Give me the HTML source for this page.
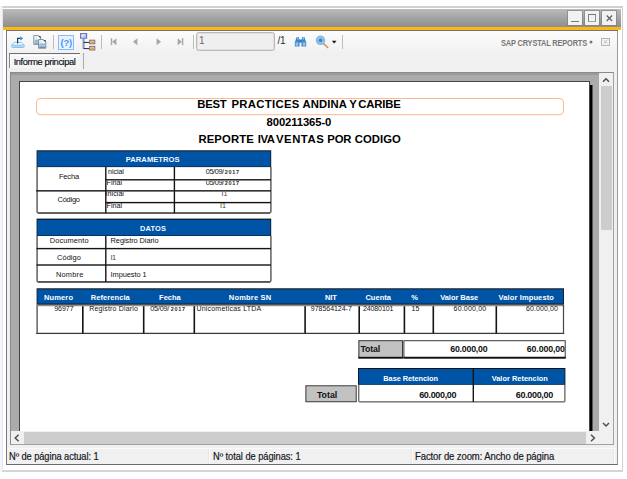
<!DOCTYPE html>
<html>
<head>
<meta charset="utf-8">
<title>Informe</title>
<style>
html,body{margin:0;padding:0;}
body{width:627px;height:479px;background:#fff;position:relative;overflow:hidden;font-family:"Liberation Sans",sans-serif;}
.a{position:absolute;box-sizing:border-box;}
.t{position:absolute;white-space:nowrap;line-height:1;color:#000;}
svg{position:absolute;overflow:visible;}
</style>
</head>
<body>
<div class="a" style="left:0px;top:6px;width:3px;height:466px;background:#f3f5fa;"></div>
<div class="a" style="left:2px;top:6px;width:621px;height:466px;background:#fff;border:1px solid #d6d6d6;border-top:2px solid #d0d0d0;border-right:1.5px solid #d0d0d0;border-bottom:2px solid #d4d4d4;border-left-color:#e2e6f0;"></div>
<div class="a" style="left:3px;top:9px;width:618px;height:18px;background:linear-gradient(#bbbbbb,#a6a6a6 45%,#8e8e8e);"></div>
<div class="a" style="left:3px;top:27px;width:618px;height:3px;background:#fdb714;"></div>
<div class="a" style="left:568px;top:11px;width:14px;height:14px;background:#f2f2f2;box-shadow:0 0 0 1px rgba(120,120,120,.55);"></div>
<div class="a" style="left:585px;top:11px;width:14px;height:14px;background:#f2f2f2;box-shadow:0 0 0 1px rgba(120,120,120,.55);"></div>
<div class="a" style="left:602px;top:11px;width:14px;height:14px;background:#f2f2f2;box-shadow:0 0 0 1px rgba(120,120,120,.55);"></div>
<div class="a" style="left:571px;top:21px;width:8px;height:1px;background:#7a7a7a;"></div>
<div class="a" style="left:588px;top:14px;width:8px;height:8px;border:1px solid #8c8c8c;border-top-color:#7a7a7a;border-left-color:#808080;border-bottom-color:#a8a8a8;"></div>
<svg style="left:602px;top:11px" width="14" height="14"><path d="M4.7 4.5 L10.1 10 M10.1 4.5 L4.7 10" stroke="#666" stroke-width="1.35" fill="none"/></svg>
<div class="a" style="left:6px;top:30px;width:612px;height:435px;background:#f0f0f0;border-left:1px solid #7c7c7c;border-right:1px solid #9a9a9a;border-bottom:1px solid #6a6a6a;"></div>
<div class="a" style="left:7px;top:30px;width:610px;height:24px;background:linear-gradient(#fdfdfd,#f9f9f9 35%,#f0f0f0);"></div>
<div class="a" style="left:6px;top:30px;width:612px;height:1px;background:#747474;"></div>
<div class="a" style="left:53px;top:35px;width:1px;height:14px;background:#bdbdbd;"></div>
<div class="a" style="left:101px;top:35px;width:1px;height:14px;background:#bdbdbd;"></div>
<div class="a" style="left:193px;top:35px;width:1px;height:14px;background:#bdbdbd;"></div>
<div class="a" style="left:342px;top:35px;width:1px;height:14px;background:#bdbdbd;"></div>
<svg style="left:10px;top:34px" width="16" height="16" viewBox="0 0 16 16">
<path d="M4 8.4 L11.8 8.4 L14.2 11 L14.2 12.5 Q14.2 13.5 13.2 13.5 L2.6 13.5 Q1.6 13.5 1.6 12.5 L1.6 11 Z" fill="#fff" stroke="#86c4ef" stroke-width="1"/>
<path d="M2.2 11.3 L13.6 11.3 L13.6 12.9 L2.2 12.9 Z" fill="#a4d0f2"/>
<path d="M2 11 L13.8 11" stroke="#6db1e6" stroke-width="0.7"/>
<path d="M7.6 9.6 L7.6 4.4 L10.4 4.4" stroke="#1c3f70" stroke-width="1.2" fill="none"/>
<path d="M10.2 2.2 L13.2 4.4 L10.2 6.6 Z" fill="#3a8fd6"/>
</svg>
<svg style="left:33px;top:34px" width="14" height="15" viewBox="0 0 14 15">
<path d="M0.8 1.6 L5.4 1.6 L7.8 4 L7.8 10.4 L0.8 10.4 Z" fill="#fff" stroke="#8f8f8f" stroke-width="1"/>
<path d="M5.2 2 L7.6 2 L7.6 4.2 Z" fill="#1c3f70"/>
<rect x="1.6" y="3.6" width="3" height="0.8" fill="#c9c9c9"/>
<rect x="1.4" y="5.6" width="5.8" height="2.4" fill="#7cc0f0"/>
<rect x="1.4" y="8.6" width="4" height="0.9" fill="#2d5f9a"/>
<path d="M5.6 5.6 L10.4 5.6 L12.8 8 L12.8 14.2 L5.6 14.2 Z" fill="#fff" stroke="#878787" stroke-width="1"/>
<path d="M10.2 6 L12.6 6 L12.6 8.2 Z" fill="#1c3f70"/>
<rect x="6.4" y="7.6" width="3" height="0.8" fill="#c9c9c9"/>
<rect x="6.2" y="9.4" width="6" height="2.3" fill="#7cc0f0"/>
<rect x="6.2" y="12.5" width="6" height="1.1" fill="#2d5f9a"/>
</svg>
<div class="a" style="left:58px;top:35px;width:16px;height:15px;background:#e9f2fd;border:1px solid #86bcff;"></div>
<div class="t" style="left:60.40px;top:38.00px;font-size:9.5px;color:#4a95ff;font-weight:bold;letter-spacing:-0.165px;">(?)</div>
<svg style="left:79px;top:32px" width="18" height="19" viewBox="0 0 18 19">
<rect x="1.6" y="1.6" width="6" height="4.6" fill="#dfeaf8" stroke="#6c6cb4" stroke-width="1.1"/>
<path d="M2.4 5.4 L7 2.4 L7 5.4 Z" fill="#a9c6ea"/>
<rect x="3.4" y="6.6" width="1.1" height="10.2" fill="#a3b0c6"/>
<rect x="4.5" y="6.6" width="0.9" height="10.2" fill="#456592"/>
<rect x="4.6" y="9.9" width="6" height="1.1" fill="#1c3f70"/>
<rect x="4.6" y="16" width="6" height="1.1" fill="#1c3f70"/>
<rect x="10.6" y="8.2" width="5.2" height="3.6" fill="#fcc838" stroke="#7272b4" stroke-width="1"/>
<rect x="11.2" y="10.2" width="4" height="1.1" fill="#f09a1e"/>
<rect x="10.6" y="14.4" width="5.2" height="3.6" fill="#fcc838" stroke="#7272b4" stroke-width="1"/>
<rect x="11.2" y="16.4" width="4" height="1.1" fill="#f09a1e"/>
</svg>
<svg style="left:100px;top:30px" width="100" height="24" viewBox="0 0 100 24">
<g fill="#a6a6a6">
<rect x="10.8" y="8.2" width="1.4" height="7"/><path d="M16.4 8.2 L16.4 15.2 L12.2 11.7 Z"/>
<path d="M37.4 8.2 L37.4 15.2 L33 11.7 Z"/>
<path d="M56.6 8.2 L56.6 15.2 L61 11.7 Z"/>
<path d="M77.7 8.2 L77.7 15.2 L81.9 11.7 Z"/><rect x="81.9" y="8.2" width="1.4" height="7"/>
</g></svg>
<div class="a" style="left:196px;top:32px;width:79px;height:18.5px;background:#efefef;border:1px solid #b9b9b9;border-radius:2.5px;box-shadow:inset 0 0 0 0.5px #cfcfcf;"></div>
<div class="t" style="left:199.00px;top:36.00px;font-size:10px;color:#75607c;">1</div>
<div class="t" style="left:277.40px;top:36.00px;font-size:10px;color:#2a2a33;letter-spacing:-0.140px;">/1</div>
<svg style="left:294px;top:36px" width="13" height="12" viewBox="0 0 13 12">
<path d="M2.6 1 L4.8 1 L5.4 3.4 L5.6 10.6 L0.8 10.6 L0.8 6.4 Z" fill="#3c8acb"/>
<path d="M10.4 1 L8.2 1 L7.6 3.4 L7.4 10.6 L12.2 10.6 L12.2 6.4 Z" fill="#3c8acb"/>
<rect x="5.2" y="3.6" width="2.6" height="3" fill="#2f73b4"/>
<rect x="1.6" y="6.4" width="2.6" height="3.4" fill="#8ec5ee"/>
<rect x="8.8" y="6.4" width="2.6" height="3.4" fill="#8ec5ee"/>
<rect x="3.1" y="1.4" width="1.2" height="2" fill="#a8d3f2"/>
<rect x="8.7" y="1.4" width="1.2" height="2" fill="#a8d3f2"/>
</svg>
<svg style="left:314px;top:34px" width="24" height="16" viewBox="0 0 24 16">
<path d="M9.4 9.4 L13.6 13.4" stroke="#e0935a" stroke-width="1.7" stroke-linecap="round"/>
<circle cx="6.5" cy="6.3" r="4" fill="#9cc4ea" stroke="#79b9f3" stroke-width="1.5"/>
<circle cx="6.5" cy="6.3" r="1.9" fill="#4d83b6"/>
<path d="M17.9 6.8 L22.5 6.8 L20.2 9.4 Z" fill="#111"/>
</svg>
<div class="t" style="left:501.20px;top:39.00px;font-size:8.6px;color:#767676;font-weight:bold;letter-spacing:-0.175px;transform:scaleX(0.86);transform-origin:0 0;">SAP CRYSTAL REPORTS</div>
<svg style="left:588px;top:39px" width="6" height="6"><circle cx="3" cy="3" r="1.5" fill="#7c7c7c"/></svg>
<div class="a" style="left:601px;top:38px;width:9px;height:7.5px;background:#f4f4f4;border:1px solid #b4b4b4;"></div>
<svg style="left:601px;top:38px" width="9" height="8"><path d="M2.6 2 L6.4 5.6 M6.4 2 L2.6 5.6" stroke="#bdbdbd" stroke-width="1" fill="none"/></svg>
<div class="a" style="left:9px;top:53px;width:71px;height:15px;background:#f5f5f5;border-top:1.5px solid #707070;border-left:1px solid #858585;"></div>
<div class="a" style="left:10px;top:54.5px;width:70px;height:1px;background:#fff;"></div>
<div class="a" style="left:10px;top:54px;width:1px;height:13px;background:#fff;"></div>
<div class="a" style="left:83px;top:53px;width:1px;height:16px;background:#a9a9a9;"></div>
<div class="t" style="left:13.70px;top:58.00px;font-size:9.3px;color:#0c0c16;letter-spacing:-0.409px;-webkit-text-stroke:0.15px #0c0c16;">Informe principal</div>
<div class="a" style="left:10px;top:72px;width:604px;height:373px;background:#ababab;border-top:1px solid #8a8a8a;border-left:1px solid #8a8a8a;border-right:1px solid #a2a2a2;border-bottom:1px solid #a2a2a2;"></div>
<div class="a" style="left:11px;top:73px;width:588px;height:1.5px;background:#9a9a9a;"></div>
<div class="a" style="left:19px;top:81px;width:571px;height:350px;background:#fff;border-left:1px solid #444;border-top:1px solid #444;border-right:1px solid #444;"></div>
<div class="a" style="left:590px;top:85px;width:2px;height:346px;background:#000;"></div>
<div class="a" style="left:592px;top:85px;width:1px;height:346px;background:#5a5a5a;"></div>
<div class="a" style="left:599px;top:73px;width:14px;height:358px;background:#f0f0f0;"></div>
<div class="a" style="left:601px;top:86px;width:11px;height:144px;background:#cdcdcd;"></div>
<div class="a" style="left:11px;top:431px;width:602px;height:13px;background:#f0f0f0;"></div>
<div class="a" style="left:24px;top:432px;width:562px;height:12px;background:#cdcdcd;"></div>
<svg style="left:599px;top:73px" width="14" height="13"><path d="M4 8.7 L7 5.7 L10 8.7" stroke="#505050" stroke-width="1.5" fill="none"/></svg>
<svg style="left:599px;top:419px" width="14" height="13"><path d="M4 4 L7 7 L10 4" stroke="#505050" stroke-width="1.5" fill="none"/></svg>
<svg style="left:10px;top:432px" width="14" height="12"><path d="M8.6 2.8 L5.2 6 L8.6 9.2" stroke="#505050" stroke-width="1.5" fill="none"/></svg>
<svg style="left:586px;top:432px" width="14" height="12"><path d="M5 2.8 L8.4 6 L5 9.2" stroke="#505050" stroke-width="1.5" fill="none"/></svg>
<div class="a" style="left:7px;top:448px;width:610px;height:1px;background:#fafafa;"></div>
<div class="a" style="left:208px;top:449px;width:1px;height:15px;background:#e7e7e7;"></div>
<div class="a" style="left:209px;top:449px;width:1px;height:15px;background:#fbfbfb;"></div>
<div class="a" style="left:411px;top:449px;width:1px;height:15px;background:#e7e7e7;"></div>
<div class="a" style="left:412px;top:449px;width:1px;height:15px;background:#fbfbfb;"></div>
<div class="a" style="left:613px;top:449px;width:1px;height:15px;background:#e7e7e7;"></div>
<div class="a" style="left:614px;top:449px;width:1px;height:15px;background:#fbfbfb;"></div>
<div class="t" style="left:9.00px;top:452.00px;font-size:10px;color:#16161c;letter-spacing:-0.087px;-webkit-text-stroke:0.18px #16161c;transform:scaleX(0.93);transform-origin:0 0;">Nº de página actual: 1</div>
<div class="t" style="left:212.60px;top:452.00px;font-size:10px;color:#16161c;letter-spacing:-0.057px;-webkit-text-stroke:0.18px #16161c;transform:scaleX(0.93);transform-origin:0 0;">Nº total de páginas: 1</div>
<div class="t" style="left:415.00px;top:452.00px;font-size:10px;color:#16161c;letter-spacing:-0.101px;-webkit-text-stroke:0.18px #16161c;transform:scaleX(0.95);transform-origin:0 0;">Factor de zoom: Ancho de página</div>
<svg style="left:0;top:0" width="627" height="479" viewBox="0 0 627 479"><rect x="36.5" y="98.5" width="527" height="16.2" rx="3.8" ry="3.8" fill="none" stroke="#ffb483" stroke-width="0.95"/><rect x="36.60" y="150.30" width="234.60" height="16.80" fill="#121212"/><rect x="37.35" y="151.25" width="233.10" height="15.35" fill="#0054a6"/><path d="M37.1 167.1 L37.1 211.8 Q37.1 213.0 38.300000000000004 213.0 L268.9 213.0 Q270.9 213.0 270.9 211.0 L270.9 167.1" fill="none" stroke="#6a6a6a" stroke-width="1.6"/><rect x="38.00" y="212.40" width="232.00" height="1.30" fill="#4c4c4c"/><rect x="105.10" y="166.90" width="1.40" height="46.30" fill="#141414"/><rect x="173.70" y="166.90" width="1.40" height="46.30" fill="#141414"/><rect x="105.80" y="179.10" width="165.10" height="1.40" fill="#141414"/><rect x="36.20" y="190.15" width="234.70" height="1.40" fill="#141414"/><rect x="105.80" y="201.90" width="165.10" height="1.40" fill="#141414"/><rect x="36.60" y="218.60" width="234.60" height="17.40" fill="#121212"/><rect x="37.35" y="219.70" width="233.10" height="15.80" fill="#0054a6"/><path d="M37.1 236.0 L37.1 280.7 Q37.1 281.9 38.300000000000004 281.9 L268.9 281.9 Q270.9 281.9 270.9 279.9 L270.9 236.0" fill="none" stroke="#6a6a6a" stroke-width="1.6"/><rect x="38.00" y="281.30" width="232.00" height="1.30" fill="#4c4c4c"/><rect x="105.10" y="235.90" width="1.40" height="46.00" fill="#141414"/><rect x="36.60" y="247.90" width="234.30" height="1.40" fill="#141414"/><rect x="36.60" y="264.30" width="234.30" height="1.40" fill="#141414"/><rect x="36.60" y="288.30" width="527.40" height="16.45" fill="#121212"/><rect x="37.35" y="289.30" width="525.90" height="14.35" fill="#0054a6"/><rect x="36.30" y="305.00" width="1.70" height="29.00" fill="#767676"/><rect x="36.30" y="304.95" width="527.80" height="1.30" fill="#8e8e8e"/><rect x="562.90" y="305.00" width="1.20" height="29.00" fill="#454545"/><rect x="36.30" y="332.77" width="527.80" height="1.25" fill="#3a3a3a"/><rect x="82.00" y="306.20" width="1.60" height="27.20" fill="#141414"/><rect x="142.90" y="306.20" width="1.60" height="27.20" fill="#141414"/><rect x="193.50" y="306.20" width="1.60" height="27.20" fill="#141414"/><rect x="304.30" y="306.20" width="1.60" height="27.20" fill="#141414"/><rect x="358.40" y="306.20" width="1.60" height="27.20" fill="#141414"/><rect x="403.60" y="306.20" width="1.60" height="27.20" fill="#141414"/><rect x="432.50" y="306.20" width="1.60" height="27.20" fill="#141414"/><rect x="495.50" y="306.20" width="1.60" height="27.20" fill="#141414"/><rect x="358.40" y="340.20" width="44.60" height="18.00" fill="#c2c2c2"/><rect x="358.9" y="340.7" width="43.6" height="17" fill="none" stroke="#3a3a3a" stroke-width="1"/><rect x="358.40" y="356.80" width="44.60" height="1.80" fill="#111"/><rect x="403.9" y="340.7" width="161.3" height="17" fill="#fff" stroke="#3a3a3a" stroke-width="1"/><rect x="403.40" y="356.75" width="162.30" height="1.90" fill="#111"/><rect x="358.00" y="368.00" width="207.40" height="16.80" fill="#121212"/><rect x="358.90" y="369.00" width="205.70" height="15.50" fill="#0054a6"/><path d="M358.8 384.6 L358.8 401.4 Q358.8 401.9 359.3 401.9 L564.4 401.9 Q564.9 401.9 564.9 401.4 L564.9 384.6" fill="none" stroke="#333" stroke-width="1.0"/><rect x="472.60" y="368.40" width="1.40" height="33.50" fill="#161616"/><rect x="305.40" y="385.30" width="51.30" height="16.90" fill="#c2c2c2"/><rect x="305.9" y="385.8" width="50.3" height="15.9" fill="none" stroke="#444" stroke-width="1"/></svg>
<div class="t" style="left:197.30px;top:99.00px;font-size:11.3px;color:#000;font-weight:bold;letter-spacing:-0.279px;">BEST</div>
<div class="t" style="left:231.40px;top:99.00px;font-size:11.3px;color:#000;font-weight:bold;letter-spacing:0.326px;">PRACTICES</div>
<div class="t" style="left:302.40px;top:99.00px;font-size:11.3px;color:#000;font-weight:bold;letter-spacing:0.132px;">ANDINA</div>
<div class="t" style="left:349.20px;top:99.00px;font-size:11.3px;color:#000;font-weight:bold;letter-spacing:0.063px;">Y</div>
<div class="t" style="left:358.20px;top:99.00px;font-size:11.3px;color:#000;font-weight:bold;letter-spacing:-0.144px;">CARIBE</div>
<div class="t" style="left:266.60px;top:117.00px;font-size:11.3px;color:#000;font-weight:bold;letter-spacing:-0.119px;">800211365-0</div>
<div class="t" style="left:198.40px;top:134.00px;font-size:11.3px;color:#000;font-weight:bold;letter-spacing:0.129px;">REPORTE</div>
<div class="t" style="left:257.80px;top:134.00px;font-size:11.3px;color:#000;font-weight:bold;letter-spacing:-0.399px;">IVA</div>
<div class="t" style="left:276.00px;top:134.00px;font-size:11.3px;color:#000;font-weight:bold;letter-spacing:0.541px;">VENTAS</div>
<div class="t" style="left:327.20px;top:134.00px;font-size:11.3px;color:#000;font-weight:bold;letter-spacing:-0.094px;">POR</div>
<div class="t" style="left:354.70px;top:134.00px;font-size:11.3px;color:#000;font-weight:bold;letter-spacing:0.054px;">CODIGO</div>
<div class="t" style="left:125.80px;top:156.00px;font-size:7.6px;color:#f4f8fd;font-weight:bold;letter-spacing:0.035px;">PARAMETROS</div>
<div class="t" style="left:58.90px;top:173.00px;font-size:7.5px;color:#111;letter-spacing:-0.161px;">Fecha</div>
<div class="t" style="left:57.50px;top:196.00px;font-size:7.5px;color:#111;letter-spacing:-0.253px;">Código</div>
<div class="t" style="left:108.00px;top:168.00px;font-size:7.2px;color:#111;letter-spacing:-0.102px;">nicial</div>
<div class="a" style="left:106.4px;top:180.6px;width:60px;height:10px;overflow:hidden"><div class="t" style="left:0.20px;top:-1.60px;font-size:7.2px;color:#111;">Final</div></div>
<div class="a" style="left:106.4px;top:191.8px;width:60px;height:10px;overflow:hidden"><div class="t" style="left:-0.81px;top:-1.80px;font-size:7.2px;color:#111;">Inicial</div></div>
<div class="a" style="left:106.4px;top:203.4px;width:60px;height:9px;overflow:hidden"><div class="t" style="left:0.20px;top:-1.40px;font-size:7.2px;color:#111;">Final</div></div>
<div class="t" style="left:205.75px;top:168.00px;font-size:7.4px;color:#151515;letter-spacing:-0.435px;">05/09/</div>
<div class="t" style="left:224.75px;top:170.00px;font-size:5.5px;color:#2a2a2a;font-weight:bold;letter-spacing:0.655px;">2017</div>
<div class="a" style="left:180px;top:180.5px;width:85px;height:10px;overflow:hidden"><div class="t" style="left:25.75px;top:-1.50px;font-size:7.4px;color:#151515;letter-spacing:-0.435px;">05/09/</div></div>
<div class="a" style="left:180px;top:180.5px;width:85px;height:10px;overflow:hidden"><div class="t" style="left:44.75px;top:0.50px;font-size:5.5px;color:#2a2a2a;font-weight:bold;letter-spacing:0.655px;">2017</div></div>
<div class="a" style="left:180px;top:191.6px;width:85px;height:10px;overflow:hidden"><div class="t" style="left:41.40px;top:-1.60px;font-size:7.2px;color:#4c4444;">I1</div></div>
<div class="a" style="left:180px;top:203.4px;width:85px;height:9px;overflow:hidden"><div class="t" style="left:40.10px;top:-1.40px;font-size:7.2px;color:#4c4444;">I1</div></div>
<div class="t" style="left:140.00px;top:225.00px;font-size:7.4px;color:#f4f8fd;font-weight:bold;letter-spacing:0.171px;">DATOS</div>
<div class="t" style="left:49.70px;top:237.00px;font-size:7.4px;color:#111;letter-spacing:0.145px;">Documento</div>
<div class="t" style="left:57.10px;top:254.00px;font-size:7.4px;color:#111;letter-spacing:0.050px;">Código</div>
<div class="t" style="left:55.90px;top:271.00px;font-size:7.4px;color:#111;letter-spacing:0.216px;">Nombre</div>
<div class="t" style="left:110.60px;top:237.00px;font-size:7.4px;color:#111;letter-spacing:-0.067px;">Registro Diario</div>
<div class="t" style="left:110.60px;top:254.00px;font-size:7.4px;color:#4c4444;letter-spacing:-0.671px;">I1</div>
<div class="t" style="left:110.60px;top:271.00px;font-size:7.4px;color:#111;letter-spacing:-0.057px;">Impuesto 1</div>
<div class="t" style="left:43.95px;top:294.00px;font-size:7.5px;color:#fff;font-weight:bold;letter-spacing:0.143px;">Numero</div>
<div class="t" style="left:90.70px;top:294.00px;font-size:7.5px;color:#fff;font-weight:bold;letter-spacing:0.083px;">Referencia</div>
<div class="t" style="left:159.10px;top:294.00px;font-size:7.5px;color:#fff;font-weight:bold;letter-spacing:0.006px;">Fecha</div>
<div class="t" style="left:228.80px;top:294.00px;font-size:7.5px;color:#fff;font-weight:bold;letter-spacing:0.183px;">Nombre SN</div>
<div class="t" style="left:324.90px;top:294.00px;font-size:7.5px;color:#fff;font-weight:bold;letter-spacing:-0.041px;">NIT</div>
<div class="t" style="left:365.40px;top:294.00px;font-size:7.5px;color:#fff;font-weight:bold;letter-spacing:0.036px;">Cuenta</div>
<div class="t" style="left:411.20px;top:294.00px;font-size:7.5px;color:#fff;font-weight:bold;letter-spacing:-0.469px;">%</div>
<div class="t" style="left:440.20px;top:294.00px;font-size:7.5px;color:#fff;font-weight:bold;letter-spacing:-0.040px;">Valor Base</div>
<div class="t" style="left:498.60px;top:294.00px;font-size:7.5px;color:#fff;font-weight:bold;letter-spacing:0.118px;">Valor Impuesto</div>
<div class="t" style="left:54.13px;top:305.00px;font-size:7.0px;color:#111;">96977</div>
<div class="t" style="left:89.20px;top:305.00px;font-size:7.0px;color:#111;letter-spacing:0.172px;">Registro Diario</div>
<div class="t" style="left:150.20px;top:305.00px;font-size:7.2px;color:#111;letter-spacing:-0.164px;">05/09/</div>
<div class="t" style="left:170.80px;top:307.00px;font-size:5.5px;color:#2a2a2a;font-weight:bold;letter-spacing:0.655px;">2017</div>
<div class="t" style="left:196.40px;top:305.00px;font-size:7.0px;color:#111;letter-spacing:0.217px;">Unicometicas LTDA</div>
<div class="t" style="left:310.80px;top:305.00px;font-size:7.0px;color:#111;letter-spacing:-0.026px;">978564124-7</div>
<div class="t" style="left:362.90px;top:305.00px;font-size:7.0px;color:#111;letter-spacing:-0.092px;">24080101</div>
<div class="t" style="left:411.40px;top:305.00px;font-size:7.0px;color:#111;letter-spacing:0.214px;">15</div>
<div class="t" style="left:453.60px;top:305.00px;font-size:7.0px;color:#111;letter-spacing:0.182px;">60.000,00</div>
<div class="t" style="left:525.90px;top:305.00px;font-size:7.0px;color:#111;letter-spacing:0.120px;">60.000,00</div>
<div class="t" style="left:360.40px;top:345.00px;font-size:8.8px;color:#111;font-weight:bold;letter-spacing:-0.167px;">Total</div>
<div class="t" style="left:450.30px;top:345.00px;font-size:8.8px;color:#111;font-weight:bold;letter-spacing:-0.231px;">60.000,00</div>
<div class="a" style="left:500px;top:342px;width:64.6px;height:15px;overflow:hidden"><div class="t" style="left:26.80px;top:3.00px;font-size:8.8px;color:#111;font-weight:bold;letter-spacing:-0.119px;">60.000,00</div></div>
<div class="t" style="left:383.30px;top:375.00px;font-size:7.4px;color:#fff;font-weight:bold;letter-spacing:-0.055px;">Base Retencion</div>
<div class="t" style="left:491.70px;top:375.00px;font-size:7.4px;color:#fff;font-weight:bold;letter-spacing:0.020px;">Valor Retencion</div>
<div class="t" style="left:419.20px;top:391.00px;font-size:9px;color:#111;font-weight:bold;letter-spacing:-0.342px;">60.000,00</div>
<div class="t" style="left:515.80px;top:391.00px;font-size:9px;color:#111;font-weight:bold;letter-spacing:-0.330px;">60.000,00</div>
<div class="t" style="left:316.90px;top:391.00px;font-size:8.8px;color:#111;font-weight:bold;letter-spacing:0.008px;">Total</div>
</body>
</html>
